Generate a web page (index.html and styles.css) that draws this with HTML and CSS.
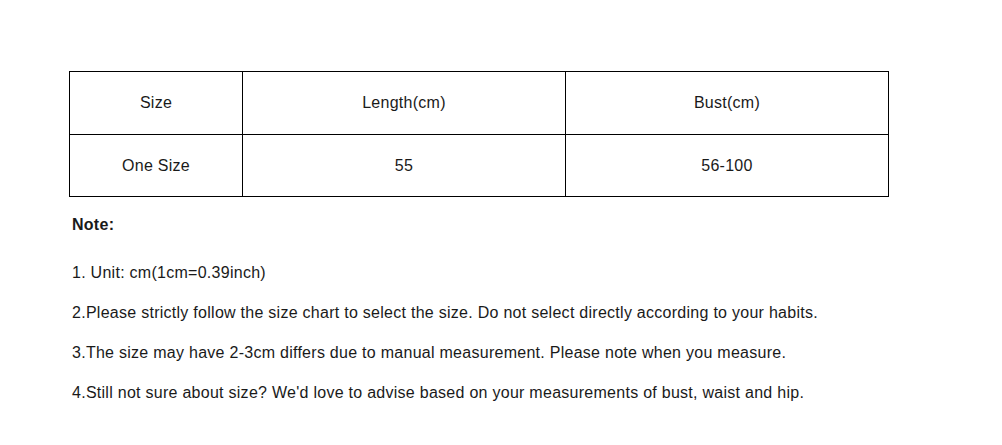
FILE: index.html
```html
<!DOCTYPE html>
<html>
<head>
<meta charset="utf-8">
<link rel="stylesheet" href="styles.css">
</head>
<body>
<div class="page">
  <table class="chart">
    <tr>
      <td class="c1">Size</td>
      <td class="c2">Length(cm)</td>
      <td class="c3">Bust(cm)</td>
    </tr>
    <tr class="r2">
      <td>One Size</td>
      <td>55</td>
      <td>56-100</td>
    </tr>
  </table>
  <div class="notes">
    <p class="note-title">Note:</p>
    <p class="first">1. Unit: cm(1cm=0.39inch)</p>
    <p>2.Please strictly follow the size chart to select the size. Do not select directly according to your habits.</p>
    <p>3.The size may have 2-3cm differs due to manual measurement. Please note when you measure.</p>
    <p>4.Still not sure about size? We'd love to advise based on your measurements of bust, waist and hip.</p>
  </div>
</div>
</body>
</html>
```

FILE: styles.css
```css
html, body {
  margin: 0;
  padding: 0;
  background: #fff;
}
.page {
  padding: 71px 0 0 69px;
  font-family: "Liberation Sans", Arial, sans-serif;
  font-size: 16px;
  letter-spacing: 0.27px;
  color: #1a1a1a;
}
.chart {
  border-collapse: collapse;
  width: 820px;
}
.chart td {
  border: 1px solid #000;
  height: 62px;
  padding: 0;
  text-align: center;
  vertical-align: middle;
}
.chart .r2 td {
  height: 61px;
}
.chart .c1 { width: 172px; }
.chart .c2 { width: 322px; }
.notes {
  padding-left: 3px;
}
.notes p {
  margin: 0;
  height: 40px;
  line-height: 40px;
}
.notes .note-title {
  font-weight: bold;
  margin-top: 8px;
  height: 40px;
}
.notes .first {
  margin-top: 8px;
}
```
